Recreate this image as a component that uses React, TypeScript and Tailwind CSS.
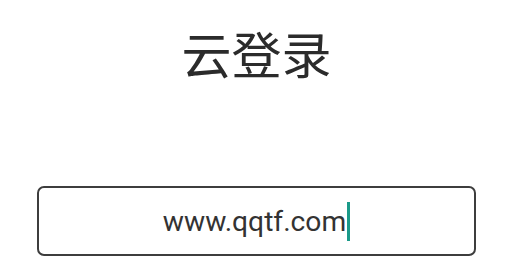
import React from 'react';

export default function App() {
  return (
    <div className="w-[532px] h-[267px] bg-white overflow-hidden">
      <div className="w-[513px] pt-[22px] flex flex-col items-center">
        <h1 className="text-[50px] leading-[60px] text-[#2b2b2b] font-normal font-['Noto_Sans_CJK_SC',sans-serif]">
          云登录
        </h1>
      </div>
      <div className="ml-[37px] mt-[104px] w-[439px] h-[70px] border-2 border-[#3d3d3d] rounded-[7px] flex items-center justify-center">
        <span className="text-[28.2px] leading-[40px] text-[#333333] font-['Roboto',sans-serif] pt-[2px]">www.qqtf.com</span>
        <span className="w-[3px] h-[39px] bg-[#1b9a89] ml-px" />
      </div>
    </div>
  );
}
